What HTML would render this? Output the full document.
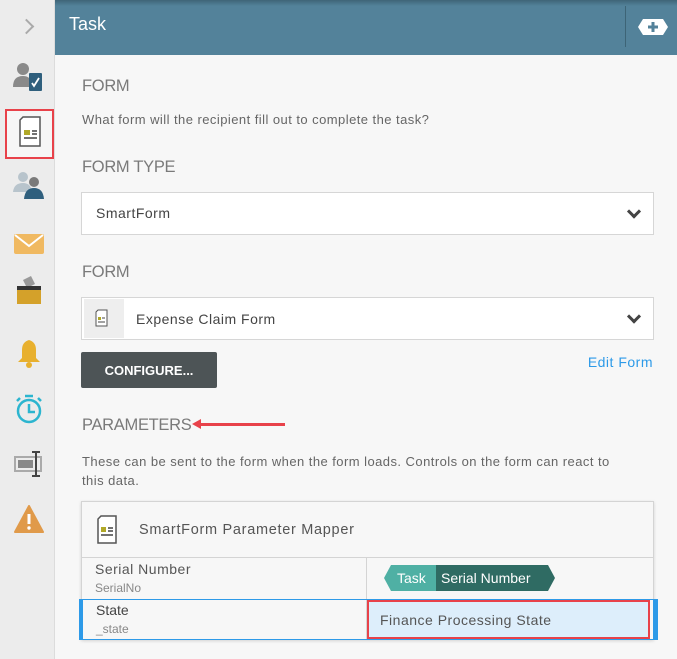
<!DOCTYPE html>
<html><head><style>
*{box-sizing:border-box;margin:0;padding:0}
body{width:677px;height:659px;overflow:hidden;background:#f7f7f7;font-family:"Liberation Sans",sans-serif;position:relative}
.abs{position:absolute}
.side{left:0;top:0;width:55px;height:659px;background:#ececec;border-right:1px solid #dcdcdc}
.hdr{left:55px;top:0;width:622px;height:55px;background:linear-gradient(#3f6477 0,#53829a 6px)}
.lbl{color:#7a7a7a;font-size:16.5px;left:82px;letter-spacing:-0.3px}
.sel{left:81px;width:573px;background:#fff;border:1px solid #d6d6d6;font-size:14px;color:#444;letter-spacing:0.5px}
.chev{position:absolute;right:14px;top:50%;width:10px;height:10px;border-right:3px solid #444;border-bottom:3px solid #444;transform:translateY(-75%) rotate(45deg)}
.t13{font-size:13px;color:#666;letter-spacing:0.45px}
</style></head><body>
<div class="abs side"></div>
<div class="abs" style="left:21px;top:21px;width:11px;height:11px;border-right:2px solid #aaa;border-top:2px solid #aaa;transform:rotate(45deg)"></div>
<svg class="abs" style="left:12px;top:60px" width="34" height="34"><circle cx="11" cy="9" r="6" fill="#8a8a8a"/><path d="M1 27 Q1 16 11 16 Q18 16 19 22 L19 27Z" fill="#8a8a8a"/><rect x="17" y="13" width="13" height="18" rx="1" fill="#2f5f7d"/><path d="M20 23 L22 26 L27 18" stroke="#fff" stroke-width="1.8" fill="none"/></svg>
<div class="abs" style="left:5px;top:109px;width:49px;height:50px;border:2px solid #e8424a;background:#f6f6f6"></div>
<svg class="abs" style="left:18px;top:116px" width="26" height="34"><path d="M5 1 H22 V30 H2 V4Z" fill="#fff" stroke="#555" stroke-width="1.5"/><rect x="6" y="14" width="6" height="5" fill="#b0a828"/><path d="M14 15h5M14 18h5M6 22h13" stroke="#444" stroke-width="1.5"/></svg>
<svg class="abs" style="left:13px;top:170px" width="34" height="30"><circle cx="10" cy="7" r="5" fill="#b8c4cc"/><path d="M0 22 Q1 13 10 13 Q18 13 19 22Z" fill="#b8c4cc"/><circle cx="21" cy="12" r="5" fill="#7a7a7a"/><path d="M11 29 Q12 18 21 18 Q30 18 31 29Z" fill="#2f5f7d"/></svg>
<svg class="abs" style="left:14px;top:232px" width="30" height="24"><rect x="0" y="2" width="30" height="20" rx="2" fill="#f0b961"/><path d="M1 3 L15 14 L29 3" stroke="#fff" stroke-width="2" fill="none"/></svg>
<svg class="abs" style="left:16px;top:276px" width="26" height="30"><path d="M7 4 L15 0 L19 8 L11 12Z" fill="#999"/><rect x="1" y="12" width="24" height="16" fill="#d4a12a"/><rect x="1" y="10" width="24" height="4" fill="#333"/></svg>
<svg class="abs" style="left:16px;top:338px" width="26" height="30"><path d="M13 2 Q20 4 20 12 L20 20 L24 24 H2 L6 20 L6 12 Q6 4 13 2Z" fill="#e8b02e"/><circle cx="13" cy="27" r="3" fill="#e8b02e"/></svg>
<svg class="abs" style="left:14px;top:393px" width="30" height="32"><circle cx="15" cy="18" r="11" fill="none" stroke="#2cb5cf" stroke-width="2.5"/><path d="M15 11 V19 H21" stroke="#2cb5cf" stroke-width="2.5" fill="none"/><path d="M11 3h8M3 8l3-3M27 8l-3-3" stroke="#2cb5cf" stroke-width="2.5"/></svg>
<svg class="abs" style="left:14px;top:450px" width="32" height="28"><rect x="1" y="7" width="26" height="14" fill="none" stroke="#aaa" stroke-width="2"/><rect x="4" y="10" width="15" height="8" fill="#888"/><path d="M22 2 V26 M18 2h8M18 26h8" stroke="#444" stroke-width="2"/></svg>
<svg class="abs" style="left:14px;top:505px" width="30" height="28"><path d="M15 1 L29 27 H1Z" fill="#e09a4a" stroke="#e09a4a" stroke-linejoin="round" stroke-width="2"/><path d="M15 9 V19" stroke="#fff" stroke-width="3"/><circle cx="15" cy="23" r="1.7" fill="#fff"/></svg>
<div class="abs hdr"></div>
<div class="abs" style="left:69px;top:14px;color:#fff;font-size:18px">Task</div>
<div class="abs" style="left:625px;top:6px;width:1px;height:41px;background:#3d6476"></div>
<svg class="abs" style="left:638px;top:19px" width="30" height="16"><path d="M5 0 H25 L30 8 L25 16 H5 L0 8Z" fill="#fff"/><path d="M15 3 V13 M10 8 H20" stroke="#53829a" stroke-width="3"/></svg>
<div class="abs lbl" style="top:77px">FORM</div>
<div class="abs t13" style="left:82px;top:112px">What form will the recipient fill out to complete the task?</div>
<div class="abs lbl" style="top:158px">FORM TYPE</div>
<div class="abs sel" style="top:192px;height:43px;padding:12px 0 0 14px">SmartForm<span class="chev"></span></div>
<div class="abs lbl" style="top:263px">FORM</div>
<div class="abs sel" style="top:297px;height:43px;padding:13px 0 0 54px"><div class="abs" style="left:2px;top:1px;width:40px;height:39px;background:#eee"></div>
<svg class="abs" style="left:13px;top:11px" width="14" height="19"><path d="M3 1H12V17H1V3Z" fill="#fff" stroke="#555"/><rect x="3" y="8" width="3" height="3" fill="#b0a828"/><path d="M7 9h3M3 13h7" stroke="#444"/></svg>Expense Claim Form<span class="chev"></span></div>
<div class="abs" style="left:81px;top:352px;width:136px;height:36px;background:#4d5456;border-radius:2px;color:#fff;font-size:13px;font-weight:bold;padding-top:11px;text-align:center">CONFIGURE...</div>
<div class="abs" style="right:24px;top:354px;color:#2d9ae8;font-size:14px;letter-spacing:0.5px">Edit Form</div>
<div class="abs lbl" style="top:416px">PARAMETERS</div>
<div class="abs" style="left:198px;top:423px;width:87px;height:3px;background:#e8424a"></div>
<div class="abs" style="left:192px;top:419px;width:0;height:0;border-top:5px solid transparent;border-bottom:5px solid transparent;border-right:9px solid #e8424a"></div>
<div class="abs t13" style="left:82px;top:452px;width:552px;line-height:19px">These can be sent to the form when the form loads. Controls on the form can react to this data.</div>
<div class="abs" style="left:81px;top:501px;width:573px;height:139px;background:#f7f7f7;border:1px solid #d4d4d4;box-shadow:0 1px 3px rgba(0,0,0,.15)"></div>
<svg class="abs" style="left:96px;top:515px" width="22" height="30"><path d="M5 1H20V28H2V4Z" fill="#fff" stroke="#555" stroke-width="1.5"/><rect x="5" y="12" width="5" height="5" fill="#b0a828"/><path d="M12 13h5M12 16h5M5 20h12" stroke="#444" stroke-width="1.5"/></svg>
<div class="abs" style="left:139px;top:522px;font-size:14.5px;color:#555;letter-spacing:0.7px">SmartForm Parameter Mapper</div>
<div class="abs" style="left:82px;top:557px;width:571px;height:1px;background:#d4d4d4"></div>
<div class="abs" style="left:366px;top:557px;width:1px;height:83px;background:#d4d4d4"></div>
<div class="abs" style="left:95px;top:561px;font-size:14px;color:#555;letter-spacing:0.5px">Serial Number</div>
<div class="abs" style="left:95px;top:581px;font-size:12px;color:#888">SerialNo</div>
<svg class="abs" style="left:384px;top:565px" width="172" height="26"><path d="M0 13 L7 0 H52 V26 H7Z" fill="#4fb0a4"/><path d="M52 0 H164 L171 13 L164 26 H52Z" fill="#2f6b63"/><text x="13" y="18" fill="#fff" font-family="Liberation Sans" font-size="14">Task</text><text x="57" y="18" fill="#fff" font-family="Liberation Sans" font-size="14">Serial Number</text></svg>
<div class="abs" style="left:79px;top:599px;width:579px;height:41px;border:1px solid #2d9ae8;border-left:4px solid #2d9ae8;border-right:5px solid #2d9ae8"></div>
<div class="abs" style="left:367px;top:600px;width:283px;height:39px;background:#ddeefb;border:2px solid #e8424a"></div>
<div class="abs" style="left:96px;top:602px;font-size:14px;color:#444">State</div>
<div class="abs" style="left:96px;top:622px;font-size:12px;color:#888">_state</div>
<div class="abs" style="left:380px;top:612px;font-size:14px;color:#555;letter-spacing:0.5px">Finance Processing State</div>
</body></html>
